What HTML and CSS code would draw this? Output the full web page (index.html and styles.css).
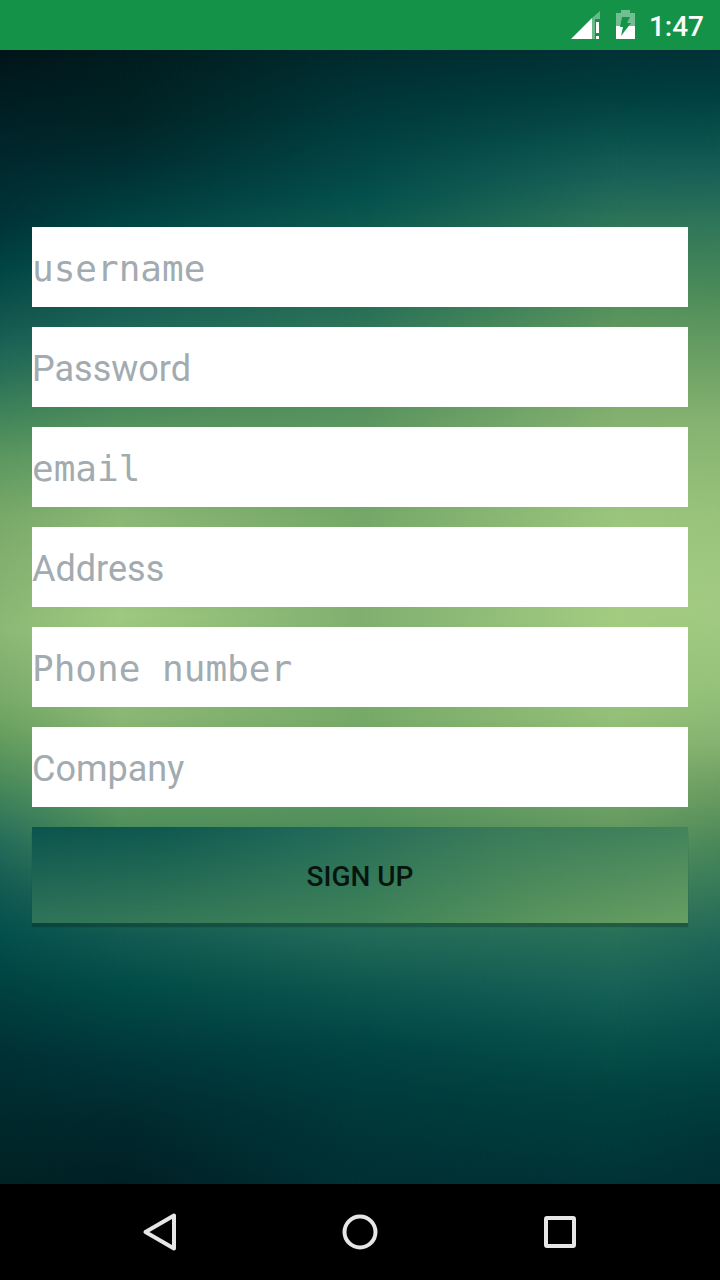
FILE: index.html
```html
<!DOCTYPE html>
<html lang="en">
<head>
<meta charset="utf-8">
<meta name="viewport" content="width=device-width, initial-scale=1">
<title>Sign up</title>
<link rel="stylesheet" href="styles.css">
</head>
<body class="screen">
<header class="status-bar">
  <svg class="signal" width="30" height="30" viewBox="0 0 30 30" aria-hidden="true">
    <path d="M21 8L29 1V9H24V29H21Z" fill="#fff" opacity=".36"/>
    <path d="M0 29L21 8V29Z" fill="#fff"/>
    <path d="M25 12h3v11h-3zM25 26h3v3h-3z" fill="#fff"/>
  </svg>
  <svg class="battery" width="19" height="30" viewBox="0 0 19 30" aria-hidden="true">
    <path d="M5 0H14V3H19V16H0V3H5Z" fill="#fff" opacity=".4"/>
    <path d="M0 16H19V29H0Z" fill="#fff"/>
    <path d="M6 7H14L11 13H15L5 26L7 17H4Z" fill="#149348"/>
  </svg>
  <time class="clock">1:47</time>
</header>
<main class="content">
  <div class="backdrop" aria-hidden="true">
    <div class="band band-start"></div>
    <div class="band band-left"></div>
    <div class="band band-middle"></div>
    <div class="band band-right"></div>
    <div class="band band-end"></div>
  </div>
  <form class="form">
    <input class="field mono" type="text" placeholder="username" aria-label="username">
    <input class="field" type="password" placeholder="Password" aria-label="Password">
    <input class="field mono" type="email" placeholder="email" aria-label="email">
    <input class="field" type="text" placeholder="Address" aria-label="Address">
    <input class="field mono" type="tel" placeholder="Phone number" aria-label="Phone number">
    <input class="field" type="text" placeholder="Company" aria-label="Company">
    <button class="submit" type="button"><span class="submit-label">SIGN UP</span></button>
  </form>
</main>
<nav class="nav-bar" aria-label="System navigation">
  <button class="nav-button" type="button" aria-label="Back">
    <svg width="40" height="40" viewBox="0 0 40 40"><path d="M34 3.500V36.500L5.500 20Z" fill="none" stroke="#e6e6e6" stroke-width="4" stroke-linejoin="round"/></svg>
  </button>
  <button class="nav-button" type="button" aria-label="Home">
    <svg width="40" height="40" viewBox="0 0 40 40"><circle cx="20" cy="20" r="15.500" fill="none" stroke="#e6e6e6" stroke-width="4"/></svg>
  </button>
  <button class="nav-button" type="button" aria-label="Recent apps">
    <svg width="40" height="40" viewBox="0 0 40 40"><rect x="6" y="6" width="28" height="28" rx="1" fill="none" stroke="#e6e6e6" stroke-width="4"/></svg>
  </button>
</nav>
</body>
</html>
```
FILE: styles.css
```css
* { box-sizing: border-box; }

.screen {
  margin: 0;
  min-height: 100vh;
  display: flex;
  flex-direction: column;
  background: #000;
  font-family: Roboto, "Liberation Sans", sans-serif;
}

.status-bar {
  height: 50px;
  padding: 0 16px;
  display: flex;
  justify-content: flex-end;
  align-items: center;
  background: #149348;
  color: #fff;
}
.battery { margin: 0 14px 0 15px; }
.clock { padding-top: 4px; font-size: 28px; line-height: 32px; font-weight: 500; }

.content {
  position: relative;
  flex: 1;
  display: flex;
  flex-direction: column;
  justify-content: center;
  padding: 32px;
}

/* Vertical gradients cross-faded from the left edge to the right edge. */
.backdrop, .band { position: absolute; inset: 0; }
.band-start {
  background: linear-gradient(#001519, #00252a 8%, #003337 15%, #004443 19%, #14584f 24%, #206858 27%, #3f835a 32%, #5c9860 36%, #78a969 41%, #82b06e 45%, #8db976 51%, #7aab6a 57%, #629c5e 61%, #40835a 66%, #246c5a 70%, #135a52 74%, #04504c 78%, #00413f 83%, #003034 89%, #002224);
}
.band-left {
  background: linear-gradient(#001c1e, #002426 6%, #002e31 10%, #004342 15%, #1c6457 24%, #4d8c5b 32%, #8ab774 41%, #9fc980 50%, #8ab774 59%, #52915c 68%, #125a52 78%, #004a45 83%, #00373a 89%, #002a2e 94%, #002025);
  mask-image: linear-gradient(to right, transparent, #000 17%);
}
.band-middle {
  background: linear-gradient(#002a2d, #003a3b 6%, #04504c 13%, #0c574e 15%, #2b7358 24%, #58935e 32%, #74a768 41%, #80b070 50%, #76a968 59%, #52905c 68%, #226a58 78%, #0c554e 83%, #004443 88%, #003a3b 93%, #003034);
  mask-image: linear-gradient(to right, transparent 17%, #000 50%);
}
.band-right {
  background: linear-gradient(#003236, #003f3e 4%, #0a524c 8%, #186057 11%, #2d7459 15%, #5c965d 24%, #82b06f 32%, #9bc57d 41%, #a4cc82 50%, #94c078 59%, #679c61 68%, #287058 78%, #166057 83%, #08524b 87%, #00423f 92%, #003336);
  mask-image: linear-gradient(to right, transparent 50%, #000 86%);
}
.band-end {
  background: linear-gradient(#003237, #004040 4%, #0a524c 8%, #1a6057 11%, #2e7459 15%, #4a8a58 21%, #5a955e 24%, #74a568 29%, #86b371 33%, #98c27b 41%, #a2ca82 49%, #96c27a 56%, #85b370 61%, #66995f 66%, #4a885a 70%, #307558 75%, #1d6458 79%, #08504b 86%, #00423f 91%, #003537 96%, #003034);
  mask-image: linear-gradient(to right, transparent 86%, #000);
}

.form {
  position: relative;
  display: flex;
  flex-direction: column;
  gap: 20px;
  padding-bottom: 84px;
}
.field {
  width: 100%;
  height: 80px;
  border: 0;
  border-radius: 0;
  padding: 4px 0 0;
  background: #fff;
  color: #222;
  font: 36px/44px Roboto, "Liberation Sans", sans-serif;
}
.field.mono { padding-top: 2px; font-family: "DejaVu Sans Mono", monospace; }
.field::placeholder { color: #a2abb0; opacity: 1; }

.submit {
  position: relative;
  height: 96px;
  border: 0;
  padding: 4px 0 0;
  background: linear-gradient(to right, #307459, #3f8358 50%, #5c975e 80%, #689f63);
  box-shadow: 0 4px 1px rgba(0, 20, 10, .25);
  color: #07150f;
  font: 500 28px/32px Roboto, "Liberation Sans", sans-serif;
}
.submit::before {
  content: "";
  position: absolute;
  inset: 0;
  background: linear-gradient(to right, #0b544e, #0f584f 20%, #1d6658 40%, #38795a 70%, #42835b);
  mask-image: linear-gradient(#000, transparent);
}
.submit-label { position: relative; }

.nav-bar {
  height: 96px;
  display: flex;
  justify-content: center;
  align-items: center;
  gap: 104px;
  background: #000;
}
.nav-button {
  width: 96px;
  height: 96px;
  border: 0;
  padding: 0;
  display: flex;
  justify-content: center;
  align-items: center;
  background: none;
}
```
